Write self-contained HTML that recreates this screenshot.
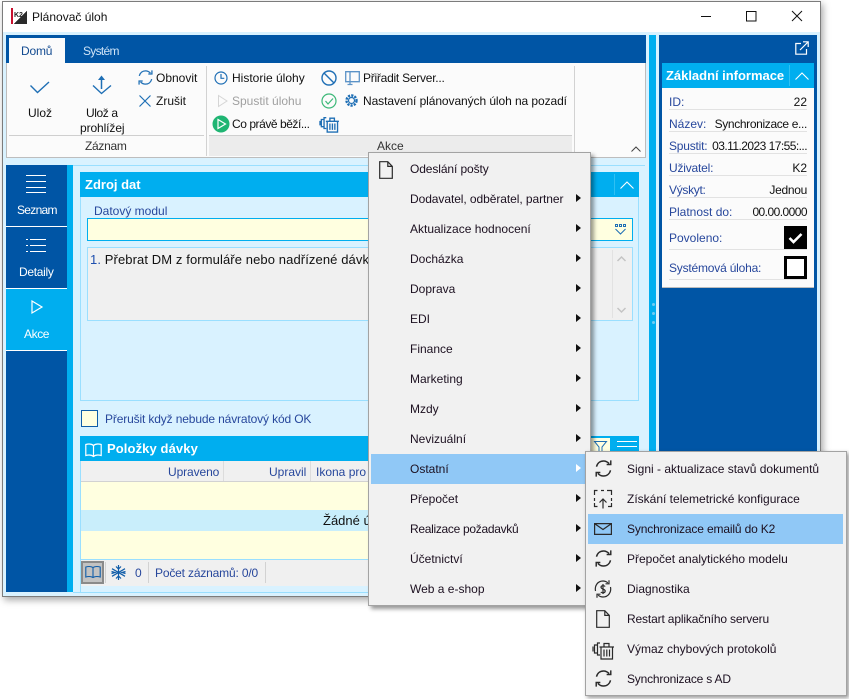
<!DOCTYPE html>
<html lang="cs">
<head>
<meta charset="utf-8">
<title>Plánovač úloh</title>
<style>
html,body{margin:0;padding:0;background:#fff;}
#p{position:relative;width:849px;height:699px;overflow:hidden;background:#fff;font:12px/16px "Liberation Sans","DejaVu Sans",sans-serif;color:#111;}
#p div,#p span,#p svg{position:absolute;}
#p span{white-space:nowrap;}
.l{color:#27479c;}
.w{color:#fff;}
.h{color:#fff;font-weight:bold;font-size:13px;}
.u{height:1px;left:669px;width:138px;background:#e2e2e2;}
.r{right:42px;text-align:right;}
.m{left:410px;color:#1c1020;}
.s{left:627px;color:#1c1020;}
.a{left:576px;width:0;height:0;border-left:5px solid #111;border-top:4px solid transparent;border-bottom:4px solid transparent;}
svg{fill:none;overflow:visible;}
.b{stroke:#1f6fb5;stroke-width:1.2;}
.k{stroke:#2a2a2a;stroke-width:1.2;}
</style>
</head>
<body>
<div id="p">
<svg width="0" height="0" style="left:0;top:0">
<defs>
<symbol id="sync" viewBox="1 1 14 14" overflow="visible"><path d="M2.200 6.500C3 3.500 5.300 1.800 8 1.800c1.900 0 3.400.8 4.600 2.100M14 1.300v3.400h-3.400M13.800 9.500c-.8 3-3.100 4.700-5.800 4.700-1.900 0-3.400-.8-4.600-2.100M2 14.700v-3.400h3.400"/></symbol>
<symbol id="doc" viewBox="0 0 14 18" overflow="visible"><path d="M.7.7h8.100l4.500 4.700v11.900H.7zM8.800.7v4.700h4.500"/></symbol>
<symbol id="trash" viewBox="0 0 22 20" overflow="visible"><path d="M8 3H5.500v12H8M5 5H2.500v8H5M1 6.500v5M9 7h11.500v12H9zM7.500 7h14.500M12 7V3.500h5V7M12 9.500v7M14.800 9.500v7M17.500 9.500v7"/></symbol>
</defs>
</svg>

<!-- window -->
<div style="left:2px;top:1px;width:817px;height:594px;border:1px solid #7c7c7c;background:#d9f2ff;box-shadow:2px 3px 7px rgba(0,0,0,.35)"></div>
<div style="left:3px;top:2px;width:817px;height:30px;background:#fff"></div>
<!-- logo -->
<div style="left:11px;top:8px;width:16px;height:16px;background:linear-gradient(135deg,#fff 58%,#2a2a2a 59%)"></div>
<div style="left:11px;top:8px;width:2px;height:16px;background:#c8102e"></div>
<span style="left:14px;top:11px;font:bold 7px/10px 'Liberation Sans',sans-serif;color:#222">K2</span>
<span style="left:32px;top:9px;color:#111">Plánovač úloh</span>
<svg style="left:700px;top:9px" width="110" height="16"><path d="M1 7.500h10" stroke="#111"/><path d="M46.500 2.500h9.500v9.500h-9.500z" stroke="#111" stroke-width="1"/><path d="M92 2l10 10M102 2l-10 10" stroke="#111" stroke-width="1"/></svg>

<!-- ribbon -->
<div style="left:6px;top:35px;width:640px;height:28px;background:#0055a5"></div>
<div style="left:9px;top:38px;width:56px;height:25px;background:#fbfbfb"></div>
<span style="left:21px;top:43px;color:#124a90;letter-spacing:-.2px">Domů</span>
<span style="left:83px;top:43px;color:#cfe4f7;letter-spacing:-.7px">Systém</span>
<div style="left:6px;top:63px;width:640px;height:95px;background:#fbfbfb;border-bottom:1px solid #bdbdbd;border-left:1px solid #bdbdbd;border-right:1px solid #bdbdbd;box-sizing:border-box"></div>
<div style="left:206px;top:66px;width:1px;height:90px;background:#d2d2d2"></div>
<div style="left:574px;top:66px;width:1px;height:90px;background:#d2d2d2"></div>
<div style="left:9px;top:135px;width:195px;height:1px;background:#cfcfcf"></div>
<div style="left:209px;top:135px;width:363px;height:21px;background:#ececec;border-top:1px solid #cfcfcf;box-sizing:border-box"></div>

<svg style="left:30px;top:81px" width="20" height="14"><path d="M0.500 4.500L7.500 11.500 19 1" stroke="#1f6fb5" stroke-width="1.400"/></svg>
<span style="left:28px;top:105px">Ulož</span>
<svg style="left:92px;top:74px" width="20" height="22"><path d="M1 11.500L9.500 19.500 19 11.500" stroke="#1f6fb5" stroke-width="1.400"/><path d="M9.500 15V3" stroke="#1f6fb5" stroke-width="1.500"/><path d="M6 6l3.500-4.500L13 6z" fill="#1f6fb5"/></svg>
<span style="left:86px;top:105px;letter-spacing:-.4px">Ulož a</span>
<span style="left:80px;top:120px;letter-spacing:-.1px">prohlížej</span>
<span style="left:85px;top:138px;color:#333;letter-spacing:-.3px">Záznam</span>

<svg class="b" style="left:138px;top:70px" width="15" height="15"><use href="#sync" width="15" height="15"/></svg>
<span style="left:156px;top:70px">Obnovit</span>
<svg class="b" style="left:139px;top:95px" width="12" height="12"><path d="M.5.500l11 11M11.500.5l-11 11"/></svg>
<span style="left:156px;top:93px">Zrušit</span>

<svg style="left:214px;top:71px" width="14" height="14" class="b"><circle cx="7" cy="7" r="6"/><path d="M7 3v4.300h3.300"/></svg>
<span style="left:232px;top:70px">Historie úlohy</span>
<svg style="left:218px;top:95px" width="10" height="12"><path d="M.5.500L9 6 .5 11.500z" stroke="#d5d5d5"/></svg>
<span style="left:232px;top:93px;color:#a0a0a0">Spustit úlohu</span>
<svg style="left:212px;top:115px" width="18" height="18"><circle cx="9" cy="9" r="8.500" fill="#1fb573"/><path d="M6 4.500L13.500 9 6 13.500z" stroke="#fff" stroke-width="1.200"/></svg>
<span style="left:232px;top:116px;letter-spacing:-.45px">Co právě běží...</span>

<svg style="left:321px;top:70px" width="16" height="16" stroke="#1f6fb5" stroke-width="1.400"><circle cx="8" cy="8" r="7"/><path d="M3 3l10 10"/></svg>
<svg style="left:345px;top:71px" width="15" height="15" stroke="#5c93c7" stroke-width="1.300"><path d="M.7.700h13.600v10H.7zM5 .7v10M2.500 13.500h5M5 10.700v2.800"/></svg>
<span style="left:363px;top:70px;letter-spacing:-.25px">Přiřadit Server...</span>
<svg style="left:321px;top:93px" width="16" height="16"><circle cx="8" cy="8" r="7" stroke="#3cb878" stroke-width="1.200"/><path d="M4.500 8l2.500 3 5-5.500" stroke="#3cb878" stroke-width="1.200"/></svg>
<svg style="left:345px;top:94px" width="13" height="13"><circle cx="6.500" cy="6.500" r="5" stroke="#1f6fb5" stroke-width="2.400" stroke-dasharray="2.200 1.100"/><circle cx="6.500" cy="6.500" r="3" stroke="#1f6fb5" stroke-width="1.200"/></svg>
<span style="left:363px;top:93px;letter-spacing:-.08px">Nastavení plánovaných úloh na pozadí</span>
<svg style="left:319px;top:115px;stroke:#1f6fb5;stroke-width:1.500" width="20" height="18"><use href="#trash" width="20" height="18"/></svg>
<span style="left:377px;top:138px;color:#333">Akce</span>
<svg style="left:631px;top:146px" width="10" height="6"><path d="M.5 5.500L5 1l4.500 4.500" stroke="#444"/></svg>

<!-- splitter + right panel -->
<div style="left:649px;top:35px;width:7px;height:558px;background:#00aeef"></div>
<div style="left:652px;top:303px;width:3px;height:3px;border-radius:50%;background:#6fcdf3"></div>
<div style="left:652px;top:312px;width:3px;height:3px;border-radius:50%;background:#6fcdf3"></div>
<div style="left:652px;top:321px;width:3px;height:3px;border-radius:50%;background:#6fcdf3"></div>
<div style="left:659px;top:35px;width:158px;height:558px;background:#0055a5"></div>
<svg style="left:795px;top:41px" width="14" height="14" stroke="#fff" stroke-width="1.200"><path d="M6 2.500H.8v10.700h10.700V8M5 9l8-8M8 .8h5.200V6"/></svg>
<div style="left:662px;top:63px;width:152px;height:25px;background:#00aeef"></div>
<span class="h" style="left:666px;top:68px;letter-spacing:-.02px">Základní informace</span>
<div style="left:789px;top:65px;width:1px;height:21px;background:#2fc0f3"></div>
<svg style="left:795px;top:72px" width="14" height="8"><path d="M.5 7.500L7 1l6.500 6.500" stroke="#fff" stroke-width="1.100"/></svg>
<div style="left:662px;top:88px;width:152px;height:200px;background:#fbfbfb;border-bottom:1px solid #bdbdbd;box-sizing:border-box"></div>
<span class="l" style="left:669px;top:94px">ID:</span><span class="r" style="top:94px">22</span><div class="u" style="top:109px"></div>
<span class="l" style="left:669px;top:116px">Název:</span><span class="r" style="top:116px;letter-spacing:-.35px">Synchronizace e...</span><div class="u" style="top:131px"></div>
<span class="l" style="left:669px;top:138px;letter-spacing:-.2px">Spustit:</span><span class="r" style="top:138px;letter-spacing:-.55px">03.11.2023 17:55:...</span><div class="u" style="top:153px"></div>
<span class="l" style="left:669px;top:160px;letter-spacing:-.2px">Uživatel:</span><span class="r" style="top:160px">K2</span><div class="u" style="top:175px"></div>
<span class="l" style="left:669px;top:182px;letter-spacing:-.3px">Výskyt:</span><span class="r" style="top:182px;letter-spacing:-.3px">Jednou</span><div class="u" style="top:197px"></div>
<span class="l" style="left:669px;top:204px">Platnost do:</span><span class="r" style="top:204px;letter-spacing:-.55px">00.00.0000</span><div class="u" style="top:219px"></div>
<span class="l" style="left:669px;top:230px">Povoleno:</span><div class="u" style="top:249px"></div>
<div style="left:784px;top:226px;width:23px;height:23px;background:#000"></div>
<svg style="left:788px;top:232px" width="15" height="12"><path d="M1.500 6L5.500 10 13.500 2" stroke="#fff" stroke-width="2.600"/></svg>
<span class="l" style="left:669px;top:260px;letter-spacing:-.2px">Systémová úloha:</span><div class="u" style="top:279px"></div>
<div style="left:784px;top:256px;width:23px;height:23px;background:#fff;border:3px solid #000;box-sizing:border-box"></div>

<!-- left nav -->
<div style="left:6px;top:165px;width:61px;height:427px;background:#0055a5"></div>
<div style="left:67px;top:165px;width:6px;height:427px;background:#00aeef"></div>
<div style="left:73px;top:165px;width:572px;height:1px;background:#9adfff"></div>
<div style="left:73px;top:592px;width:572px;height:1px;background:#9adfff"></div>
<div style="left:6px;top:226px;width:61px;height:1px;background:#fff"></div>
<div style="left:6px;top:288px;width:61px;height:1px;background:#fff"></div>
<div style="left:6px;top:289px;width:67px;height:61px;background:#00aeef"></div>
<div style="left:6px;top:350px;width:61px;height:1px;background:#fff"></div>
<svg style="left:26px;top:175px" width="20" height="18" stroke="#fff"><path d="M0 .5h20M0 6.500h20M0 12.500h20M0 17.500h20"/></svg>
<span class="w" style="left:17px;top:202px;letter-spacing:-.7px">Seznam</span>
<svg style="left:26px;top:238px" width="20" height="15" stroke="#fff"><path d="M4 1.500h16M4 7.500h16M4 13.500h16M0 1.500h2M0 7.500h2M0 13.500h2" /></svg>
<span class="w" style="left:19px;top:264px;letter-spacing:-.3px">Detaily</span>
<svg style="left:31px;top:300px" width="12" height="14"><path d="M1 1l10 6-10 6z" stroke="#fff" stroke-width="1.200"/></svg>
<span class="w" style="left:24px;top:326px;letter-spacing:-.4px">Akce</span>

<!-- Zdroj dat -->
<div style="left:80px;top:197px;width:559px;height:204px;border:1px solid #9adfff;border-top:0;box-sizing:border-box"></div>
<div style="left:80px;top:172px;width:559px;height:25px;background:#00aeef"></div>
<span class="h" style="left:85px;top:177px">Zdroj dat</span>
<div style="left:614px;top:174px;width:1px;height:21px;background:#2fc0f3"></div>
<svg style="left:620px;top:181px" width="14" height="8"><path d="M.5 7.500L7 1l6.500 6.500" stroke="#fff" stroke-width="1.100"/></svg>
<span class="l" style="left:94px;top:203px">Datový modul</span>
<div style="left:87px;top:218px;width:546px;height:23px;background:#ffffe0;border:1px solid #00aeef;box-sizing:border-box"></div>
<svg style="left:615px;top:224px" width="12" height="11" stroke="#1f6fb5" stroke-width="1"><path d="M.5.500h2v2h-2zM4.500.500h2v2h-2zM8.500.500h2v2h-2zM.5 5l5 5 5-5" /></svg>
<div style="left:87px;top:247px;width:546px;height:74px;background:#f0f0f0;border:1px solid #9adfff;box-sizing:border-box"></div>
<span style="left:90px;top:252px;font-size:13px;letter-spacing:.1px"><b style="font-weight:normal;color:#1f4fae">1.</b> Přebrat DM z formuláře nebo nadřízené dávky</span>
<div style="left:612px;top:250px;width:1px;height:68px;background:#e2e2e2"></div>
<svg style="left:617px;top:256px" width="9" height="58" stroke="#c4c4c4" stroke-width="1.500"><path d="M.5 5L4.500 1l4 4M.5 52l4 4 4-4"/></svg>

<div style="left:81px;top:410px;width:17px;height:17px;background:#ffffe0;border:1px solid #0f5ca8;box-sizing:border-box"></div>
<span class="l" style="left:105px;top:411px;letter-spacing:-.14px">Přerušit když nebude návratový kód OK</span>

<!-- Položky dávky -->
<div style="left:80px;top:436px;width:559px;height:25px;background:#00aeef"></div>
<svg style="left:85px;top:443px" width="17" height="15" stroke="#fff" stroke-width="1.200"><path d="M8.500 2.500C6.500 .8 3.500 .8 .8 1.500v11c2.700-.7 5.700-.7 7.700 1 2-1.700 5-1.700 7.700-1v-11c-2.700-.7-5.700-.7-7.700 1zM8.500 2.500v11"/></svg>
<span class="h" style="left:107px;top:441px;letter-spacing:.1px">Položky dávky</span>
<div style="left:591px;top:438px;width:19px;height:23px;background:#ffffe0"></div>
<svg style="left:594px;top:441px" width="13" height="13"><path d="M.5.500h12L8 6v6L5 10.500V6z" stroke="#1f6fb5"/></svg>
<svg style="left:617px;top:441px" width="20" height="11" stroke="#fff"><path d="M0 .5h20M0 5.500h20M0 10.500h20"/></svg>

<div style="left:80px;top:461px;width:1px;height:131px;background:#9adfff"></div>
<div style="left:81px;top:461px;width:558px;height:21px;background:#f0f0f0;border-bottom:1px solid #d2d2d2;box-sizing:border-box"></div>
<div style="left:223px;top:461px;width:1px;height:20px;background:#dcdcdc"></div>
<div style="left:310px;top:461px;width:1px;height:20px;background:#dcdcdc"></div>
<span class="l" style="left:168px;top:464px;letter-spacing:-.1px">Upraveno</span>
<span class="l" style="left:269px;top:464px">Upravil</span>
<span class="l" style="left:316px;top:464px">Ikona pro</span>
<div style="left:81px;top:482px;width:558px;height:28px;background:#ffffe0"></div>
<div style="left:81px;top:510px;width:558px;height:21px;background:#c9eefb"></div>
<span style="left:323px;top:513px;font-size:13px">Žádné údaje</span>
<div style="left:81px;top:531px;width:558px;height:28px;background:#ffffe0"></div>
<div style="left:81px;top:559px;width:558px;height:1px;background:#9adfff"></div>
<div style="left:81px;top:560px;width:558px;height:26px;background:#f0f0f0"></div>
<div style="left:81px;top:561px;width:23px;height:23px;background:#c2c2c2;border:2px solid #8a8a8a;box-sizing:border-box"></div>
<svg style="left:85px;top:566px" width="16" height="13" stroke="#0f5ca8" stroke-width="1.100"><path d="M8 1.500C6 .3 3.300 .3.800 1v10c2.500-.7 5.200-.7 7.200.5 2-1.200 4.700-1.200 7.200-.5V1C12.700 .3 10 .3 8 1.500zM8 1.500v10"/></svg>
<div style="left:105px;top:562px;width:1px;height:21px;background:#d2d2d2"></div>
<svg style="left:111px;top:565px" width="15" height="15" stroke="#0f5ca8" stroke-width="1.200"><path d="M7.500 0v15M1 3.700l13 7.600M14 3.700L1 11.300M5 1.500l2.500 2.500L10 1.500M5 13.500l2.500-2.500 2.500 2.500M.5 6.500l3.500 1-3.500 1M14.500 6.500l-3.500 1 3.500 1"/></svg>
<span class="l" style="left:135px;top:565px">0</span>
<div style="left:148px;top:562px;width:1px;height:21px;background:#d2d2d2"></div>
<span class="l" style="left:155px;top:565px;letter-spacing:-.17px">Počet záznamů: 0/0</span>
<div style="left:265px;top:562px;width:1px;height:21px;background:#d2d2d2"></div>

<!-- main menu -->
<div style="left:368px;top:152px;width:223px;height:454px;background:#f1f1f1;border:1px solid #a3a3a3;box-sizing:border-box;box-shadow:3px 3px 4px rgba(0,0,0,.4)"></div>
<div style="left:371px;top:454px;width:214px;height:30px;background:#90c8f6"></div>
<svg class="k" style="left:379px;top:161px" width="14" height="18"><use href="#doc" width="14" height="18"/></svg>
<span class="m" style="top:161px;letter-spacing:-.1px">Odeslání pošty</span>
<span class="m" style="top:191px;letter-spacing:-.07px">Dodavatel, odběratel, partner</span><div class="a" style="top:194px"></div>
<span class="m" style="top:221px">Aktualizace hodnocení</span><div class="a" style="top:224px"></div>
<span class="m" style="top:251px">Docházka</span><div class="a" style="top:254px"></div>
<span class="m" style="top:281px">Doprava</span><div class="a" style="top:284px"></div>
<span class="m" style="top:311px">EDI</span><div class="a" style="top:314px"></div>
<span class="m" style="top:341px">Finance</span><div class="a" style="top:344px"></div>
<span class="m" style="top:371px">Marketing</span><div class="a" style="top:374px"></div>
<span class="m" style="top:401px">Mzdy</span><div class="a" style="top:404px"></div>
<span class="m" style="top:431px">Nevizuální</span><div class="a" style="top:434px"></div>
<span class="m" style="top:461px">Ostatní</span><div class="a" style="top:464px;border-left-color:#fff"></div>
<span class="m" style="top:491px">Přepočet</span><div class="a" style="top:494px"></div>
<span class="m" style="top:521px;letter-spacing:-.3px">Realizace požadavků</span><div class="a" style="top:524px"></div>
<span class="m" style="top:551px">Účetnictví</span><div class="a" style="top:554px"></div>
<span class="m" style="top:581px">Web a e-shop</span><div class="a" style="top:584px"></div>

<!-- submenu -->
<div style="left:585px;top:451px;width:262px;height:245px;background:#f1f1f1;border:1px solid #a3a3a3;box-sizing:border-box;box-shadow:2px 2px 4px rgba(0,0,0,.4)"></div>
<div style="left:588px;top:514px;width:255px;height:30px;background:#90c8f6"></div>
<svg class="k" style="left:595px;top:460px" width="17" height="17"><use href="#sync" width="17" height="17"/></svg>
<span class="s" style="top:461px">Signi - aktualizace stavů dokumentů</span>
<svg class="k" style="left:594px;top:490px" width="18" height="19"><path d="M0.500 5V.5h3M7 .5h3M13 .5h4.500V5M.5 8v3M17.500 8v3M.5 13v3.500h3M14 16.500h3.500V13M9 18.500V9M5.500 12.500L9 9l3.500 3.500"/></svg>
<span class="s" style="top:491px">Získání telemetrické konfigurace</span>
<svg class="k" style="left:594px;top:523px" width="18" height="12"><path d="M.6.600h16.800v10.800H.6zM.6.600L9 6.500 17.400.6"/></svg>
<span class="s" style="top:521px;letter-spacing:-.15px">Synchronizace emailů do K2</span>
<svg class="k" style="left:595px;top:550px" width="17" height="17"><use href="#sync" width="17" height="17"/></svg>
<span class="s" style="top:551px">Přepočet analytického modelu</span>
<svg class="k" style="left:594px;top:580px" width="18" height="18"><path d="M1.500 11C.5 6 3.500 1 9 1c2 0 3.500.7 4.800 1.800M15 .3v3.500h-3.500M16.500 7c1 5-2 10-7.500 10-2 0-3.500-.7-4.800-1.800M3 17.700v-3.500h3.500"/><path d="M11.200 6.500C10 5.300 7 5.300 7 7.300S11.200 8.800 11.200 11 8 13.200 6.800 12M9 4v10"/></svg>
<span class="s" style="top:581px">Diagnostika</span>
<svg class="k" style="left:596px;top:610px" width="14" height="18"><use href="#doc" width="14" height="18"/></svg>
<span class="s" style="top:611px;letter-spacing:-.15px">Restart aplikačního serveru</span>
<svg class="k" style="left:592px;top:640px" width="22" height="20"><use href="#trash" width="22" height="20"/></svg>
<span class="s" style="top:641px">Výmaz chybových protokolů</span>
<svg class="k" style="left:595px;top:670px" width="17" height="17"><use href="#sync" width="17" height="17"/></svg>
<span class="s" style="top:671px;letter-spacing:-.2px">Synchronizace s AD</span>
</div>
</body>
</html>
